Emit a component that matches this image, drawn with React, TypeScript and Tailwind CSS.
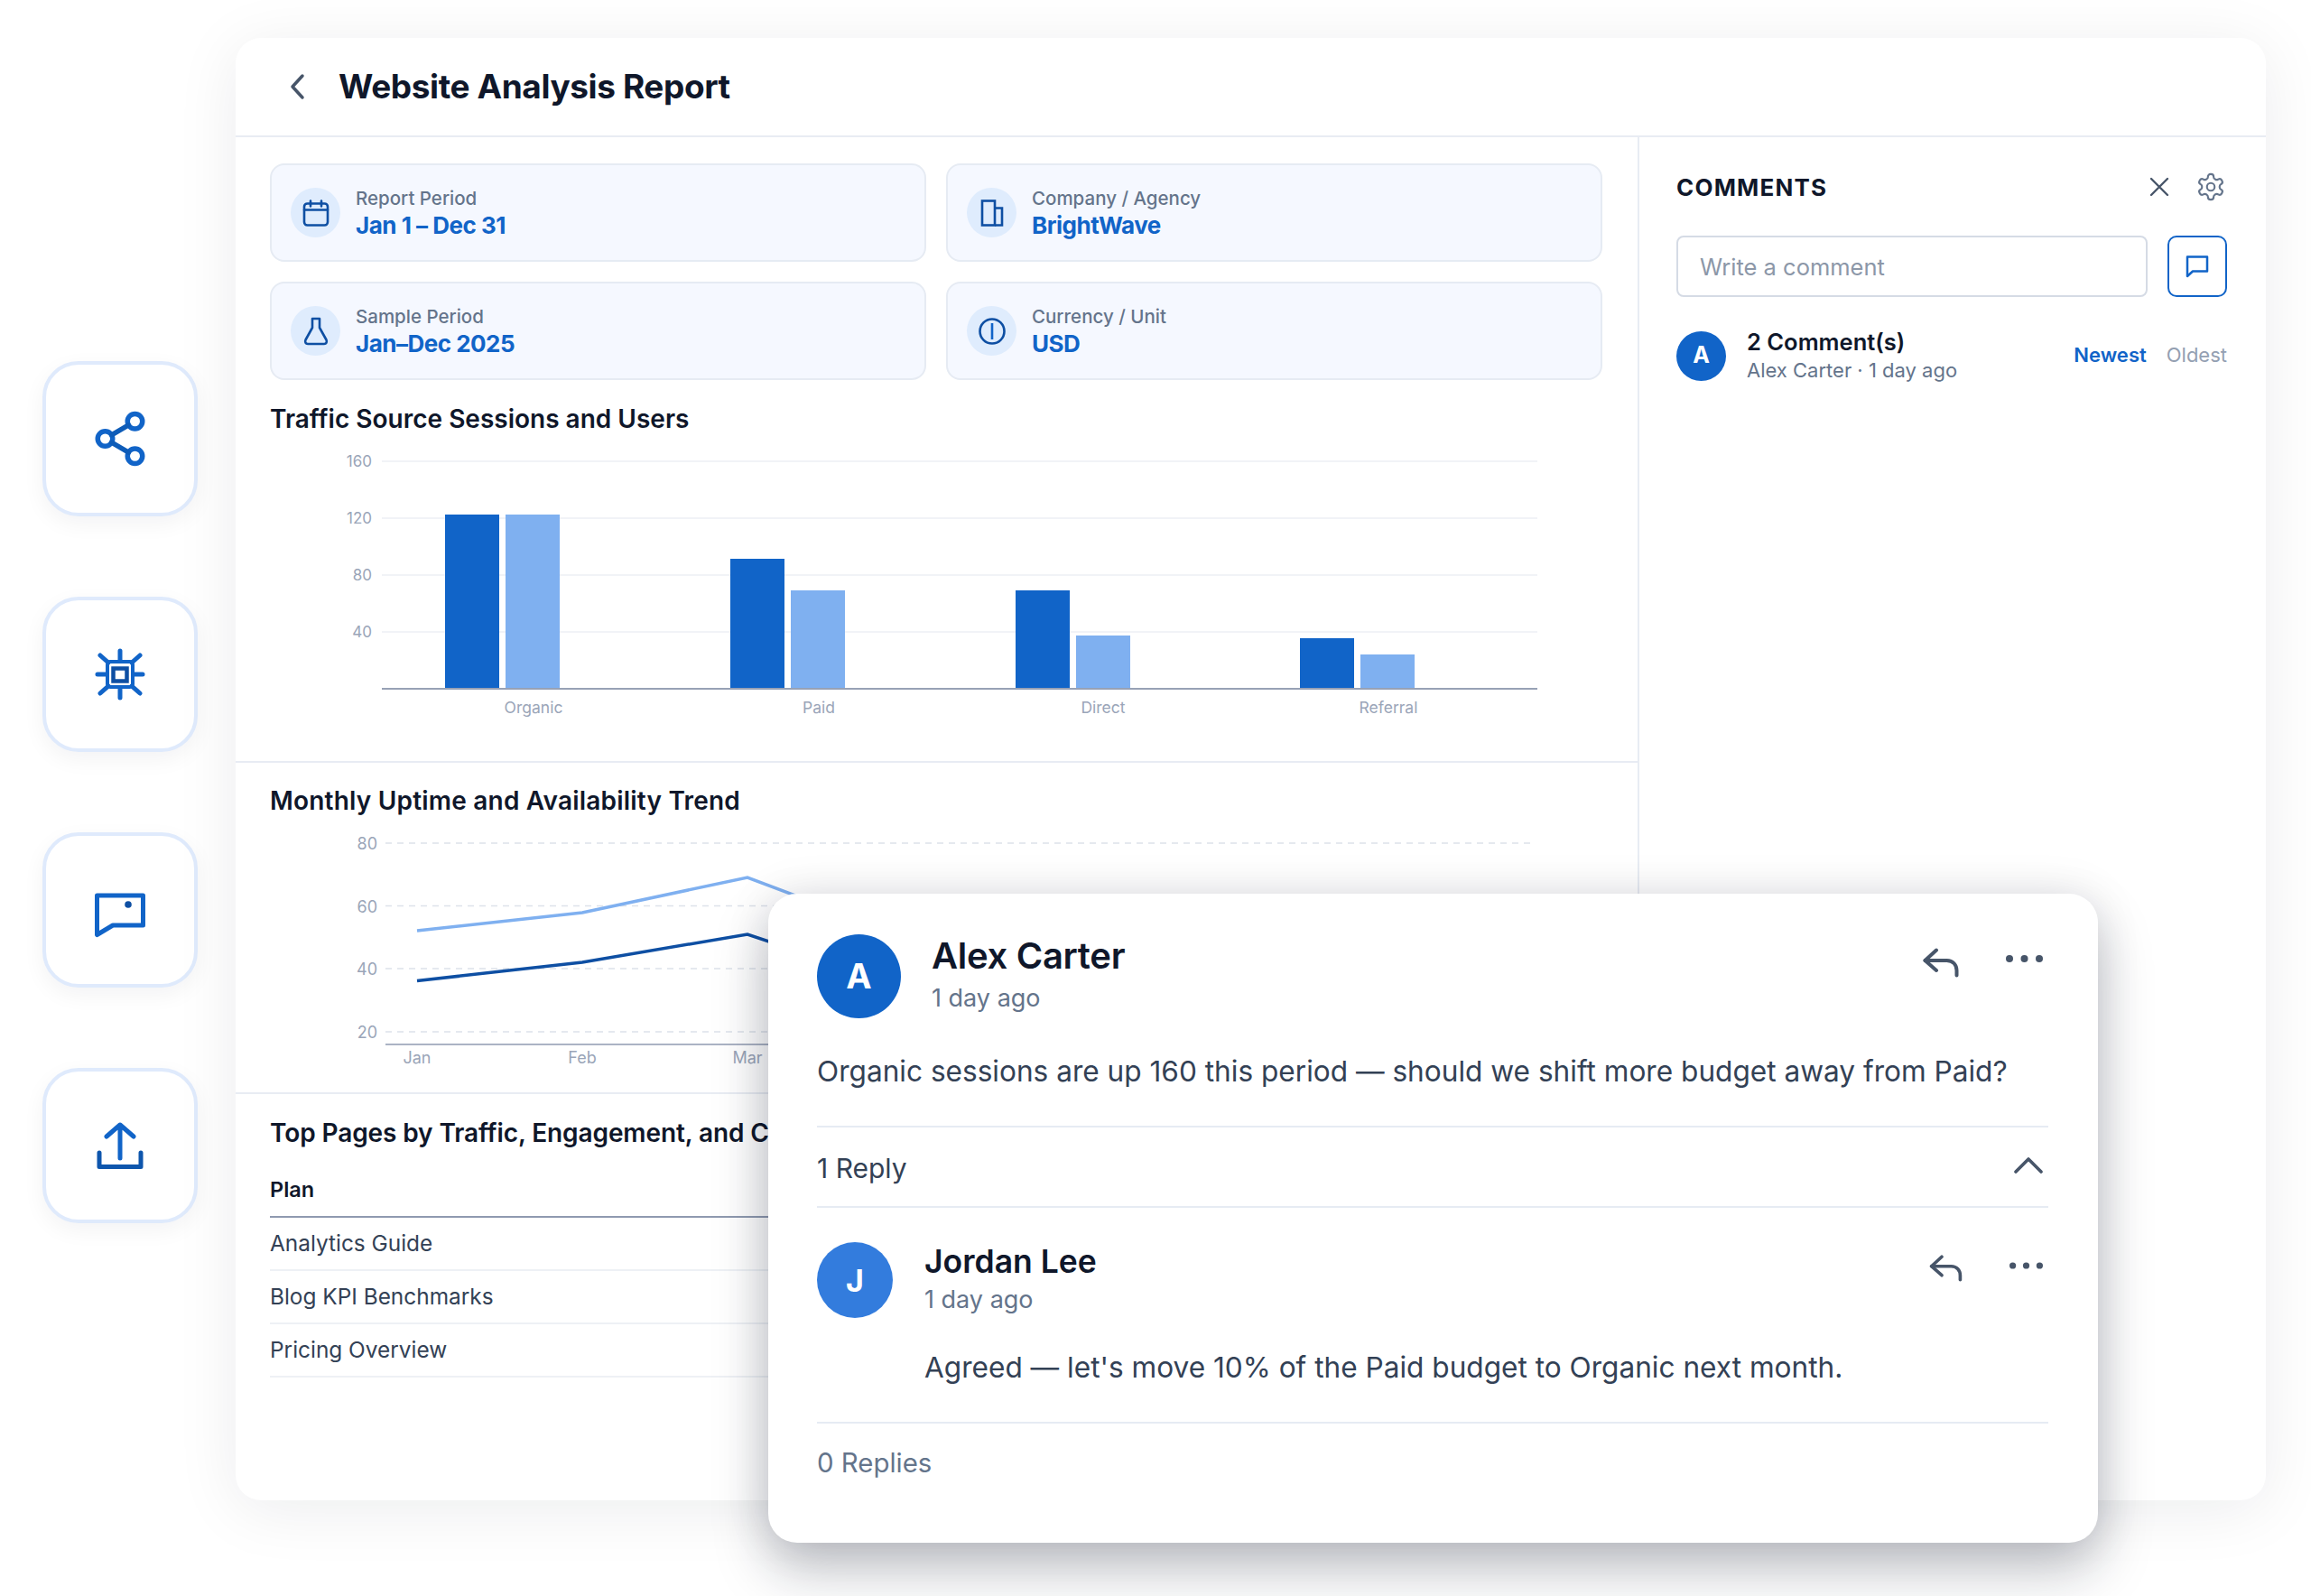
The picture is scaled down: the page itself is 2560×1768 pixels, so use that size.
import React from "react";

const BLUE = "#1164c8";
const NAVY = "#0e4fa3";

function Share() {
  return (
    <svg width="66" height="66" viewBox="0 0 24 24" fill="none" stroke={BLUE} strokeWidth="2" strokeLinecap="round" strokeLinejoin="round">
      <circle cx="18" cy="5" r="3" />
      <circle cx="6" cy="12" r="3" />
      <circle cx="18" cy="19" r="3" />
      <path d="M8.59 13.51l6.83 3.98M15.41 6.51l-6.82 3.98" stroke="#0e5cb8" />
    </svg>
  );
}
function Chip() {
  return (
    <svg width="56" height="58" viewBox="0 0 56 58" fill="none" stroke={BLUE} strokeWidth="5" strokeLinecap="round" strokeLinejoin="round">
      <path d="M28 3v10M28 45v10M3 29h10M43 29h10M6 8l9 8M50 8l-9 8M6 50l9-8M50 50l-9-8" />
      <rect x="14" y="15" width="28" height="28" rx="3" strokeWidth="4" />
      <rect x="20.500" y="22.500" width="15" height="14" stroke={NAVY} strokeWidth="4.500" strokeLinejoin="miter" />
    </svg>
  );
}
function Bubble() {
  return (
    <svg className="mt-[11px]" width="56" height="50" viewBox="0 0 56 50" fill="none" stroke={BLUE} strokeWidth="5" strokeLinejoin="round">
      <path d="M2.500 3h51v33H20L2.500 46.500z" />
      <circle cx="37" cy="13" r="3.800" fill={NAVY} stroke="none" />
    </svg>
  );
}
function Upload() {
  return (
    <svg width="52" height="52" viewBox="0 0 52 52" fill="none" stroke={BLUE} strokeWidth="5" strokeLinecap="round" strokeLinejoin="round">
      <path d="M26 40V3M11 16L26 3l15 13" />
      <path d="M3 34v15.500h46V34" stroke="#0e56ad" />
    </svg>
  );
}

function RailButton({ children }: { children: React.ReactNode }) {
  return (
    <div className="flex h-[172px] w-[172px] items-center justify-center rounded-[40px] border-[4px] border-[#dfeafc] bg-white shadow-[0_8px_24px_rgba(15,23,42,0.05)]">
      {children}
    </div>
  );
}

function InfoCard({ label, value, icon }: { label: string; value: string; icon: React.ReactNode }) {
  return (
    <div className="flex h-[109px] items-center rounded-[16px] border-2 border-[#e6ebf3] bg-[#f5f8ff] pl-[21px]">
      <div className="flex h-[55px] w-[55px] shrink-0 items-center justify-center rounded-full bg-[#dfecfd]">{icon}</div>
      <div className="ml-[17px] flex flex-col">
        <span className="text-[20.500px] leading-[28px] font-medium text-[#64748b]">{label}</span>
        <span className="text-[26px] leading-[32px] font-bold tracking-[-0.5px] text-[#1164c8]">{value}</span>
      </div>
    </div>
  );
}

const iconProps = { fill: "none", stroke: NAVY, strokeWidth: 2.6, strokeLinecap: "round" as const, strokeLinejoin: "round" as const };

function BarChart() {
  const ticks = [
    [160, 510],
    [120, 573],
    [80, 636],
    [40, 699],
  ];
  const bars = [
    { name: "Organic", x: 493, a: 569, b: 569, c: 591 },
    { name: "Paid", x: 809, a: 618, b: 653, c: 907 },
    { name: "Direct", x: 1125, a: 653, b: 703, c: 1222 },
    { name: "Referral", x: 1440, a: 706, b: 724, c: 1538 },
  ];
  return (
    <svg className="mt-[8px] block" width="1552" height="320" viewBox="261 490 1552 320" fontFamily="Inter, sans-serif">
      {ticks.map(([t, y]) => (
        <g key={t}>
          <line x1="423" x2="1703" y1={y} y2={y} stroke="#f1f3f7" strokeWidth="2" />
          <text x="412" y={y + 6} textAnchor="end" fontSize="17" fill="#9aa5b8">{t}</text>
        </g>
      ))}
      {bars.map((b) => (
        <g key={b.name}>
          <rect x={b.x} y={b.a} width="60" height={762 - b.a} fill="#1164c8" />
          <rect x={b.x + 67} y={b.b} width="60" height={762 - b.b} fill="#7fb0f0" />
          <text x={b.c} y="789" textAnchor="middle" fontSize="17.500" fill="#9aa5b8">{b.name}</text>
        </g>
      ))}
      <line x1="423" x2="1703" y1="762" y2="762" stroke="#97a1b5" strokeWidth="2" />
    </svg>
  );
}

function LineChart() {
  const ticks = [
    [80, 933],
    [60, 1002.5],
    [40, 1072],
    [20, 1142],
  ];
  const months = [
    ["Jan", 462],
    ["Feb", 645],
    ["Mar", 828],
  ] as const;
  return (
    <svg className="mt-[15px] block" width="1552" height="270" viewBox="261 920 1552 270" fontFamily="Inter, sans-serif">
      {ticks.map(([t, y]) => (
        <g key={t}>
          <line x1="427" x2="1697" y1={y} y2={y} stroke="#dde2ea" strokeWidth="1.500" strokeDasharray="7 6" />
          <text x="418" y={y + 7} textAnchor="end" fontSize="18" fill="#9aa5b8">{t}</text>
        </g>
      ))}
      <line x1="427" x2="1697" y1="1156" y2="1156" stroke="#8f9ab0" strokeWidth="1.500" />
      {months.map(([m, x]) => (
        <text key={m} x={x} y="1177" textAnchor="middle" fontSize="18" fill="#9aa5b8">{m}</text>
      ))}
      <polyline points="462,1030 645,1010 828,971 1011,1040" fill="none" stroke="#7fb0f0" strokeWidth="3.500" />
      <polyline points="462,1085.500 645,1065 828,1034 1011,1095" fill="none" stroke="#0e4fa3" strokeWidth="3.500" />
    </svg>
  );
}

function ReplyIcon({ w, h }: { w: number; h: number }) {
  return (
    <svg width={w} height={h} viewBox="0 0 40 33" fill="none" stroke="#475569" strokeWidth="4" strokeLinecap="round" strokeLinejoin="round">
      <path d="M15 2.500L2.500 14 15 25" />
      <path d="M2.500 14h24c7 0 11 5 11 11v5.500" />
    </svg>
  );
}
function Dots({ w }: { w: number }) {
  return (
    <svg width={w} height="8" viewBox="0 0 41 8" fill="#475569">
      <circle cx="4" cy="4" r="4" />
      <circle cx="20.500" cy="4" r="4" />
      <circle cx="37" cy="4" r="4" />
    </svg>
  );
}

function Overlay() {
  return (
    <div className="absolute top-[990px] left-[851px] flex h-[719px] w-[1473px] flex-col rounded-[32px] bg-white pt-[45px] pr-[55px] pl-[54px] shadow-[0_30px_60px_rgba(15,23,42,0.26),0_0_50px_rgba(15,23,42,0.1)]">
      <div className="relative flex h-[93px] items-start">
        <div className="flex h-[93px] w-[93px] shrink-0 items-center justify-center rounded-full bg-[#1164c8] text-[38px] font-bold text-white">A</div>
        <div className="ml-[34px] flex flex-col">
          <span className="text-[40px] leading-[48px] font-semibold tracking-[-0.3px] text-[#0f172a]">Alex Carter</span>
          <span className="mt-[3px] text-[27px] leading-[40px] text-[#64748b]">1 day ago</span>
        </div>
        <div className="absolute top-[15px] right-[99px]"><ReplyIcon w={40} h={33} /></div>
        <div className="absolute top-[23px] right-[6px]"><Dots w={41} /></div>
      </div>
      <p className="mt-[37px] text-[31.600px] leading-[44px] whitespace-nowrap text-[#334155]">Organic sessions are up 160 this period — should we shift more budget away from Paid?</p>
      <div className="mt-[38px] h-[2px] bg-[#e6ebf3]" />
      <div className="flex h-[87px] items-center justify-between">
        <span className="pt-[3px] text-[30px] text-[#334155]">1 Reply</span>
        <svg className="mt-[-4px] mr-[6px]" width="32" height="18" viewBox="0 0 32 18" fill="none" stroke="#475569" strokeWidth="3.600" strokeLinecap="round" strokeLinejoin="round">
          <path d="M2 16L16 2l14 14" />
        </svg>
      </div>
      <div className="h-[2px] bg-[#e6ebf3]" />
      <div className="relative mt-[38px] flex h-[84px] items-start">
        <div className="flex h-[84px] w-[84px] shrink-0 items-center justify-center rounded-full bg-[#337cdd] text-[34px] font-bold text-white">J</div>
        <div className="ml-[35px] flex flex-col">
          <span className="text-[35.500px] leading-[44px] font-semibold text-[#0f172a]">Jordan Lee</span>
          <span className="text-[27px] leading-[40px] text-[#64748b]">1 day ago</span>
        </div>
        <div className="absolute top-[14px] right-[95px]"><ReplyIcon w={37} h={30} /></div>
        <div className="absolute top-[22px] right-[6px]"><Dots w={37} /></div>
      </div>
      <p className="mt-[33px] ml-[119px] text-[31.600px] leading-[44px] whitespace-nowrap text-[#334155]">Agreed — let's move 10% of the Paid budget to Organic next month.</p>
      <div className="mt-[38px] h-[2px] bg-[#e6ebf3]" />
      <span className="mt-[24px] text-[29.400px] leading-[40px] text-[#64748b]">0 Replies</span>
    </div>
  );
}

export default function App() {
  return (
    <div className="relative flex h-[1768px] w-[2560px] overflow-hidden bg-white font-['Inter',sans-serif]">
      <div className="ml-[47px] flex w-[172px] shrink-0 flex-col gap-[89px] pt-[400px]">
        <RailButton><Share /></RailButton>
        <RailButton><Chip /></RailButton>
        <RailButton><Bubble /></RailButton>
        <RailButton><Upload /></RailButton>
      </div>

      <div className="mt-[42px] ml-[42px] flex h-[1620px] w-[2249px] flex-col overflow-hidden rounded-[28px] bg-white shadow-[0_10px_70px_rgba(15,23,42,0.08)]">
        <div className="flex h-[110px] shrink-0 items-center border-b-2 border-[#e8ecf3] pl-[59px]">
          <svg width="20" height="30" viewBox="0 0 20 30" fill="none" stroke="#475569" strokeWidth="3.500" strokeLinecap="round" strokeLinejoin="round">
            <path d="M15 3L4 15l11 12" />
          </svg>
          <h1 className="ml-[35px] text-[37px] leading-[48px] font-bold tracking-[-0.4px] text-[#0f172a]">Website Analysis Report</h1>
        </div>

        <div className="flex min-h-0 flex-1">
          <div className="flex w-[1555px] shrink-0 flex-col border-r-2 border-[#e8ecf3]">
            <div className="h-[693px] shrink-0 border-b-2 border-[#e8ecf3]">
              <div className="mt-[29px] mr-[39px] ml-[38px] grid grid-cols-2 gap-[22px]">
                <InfoCard label="Report Period" value="Jan 1 – Dec 31" icon={
                  <svg width="30" height="30" viewBox="0 0 30 30" {...iconProps}>
                    <rect x="2" y="4.500" width="26" height="24" rx="3.500" />
                    <path d="M2 11.500h26M9 1.500v6M21 1.500v6" />
                  </svg>
                } />
                <InfoCard label="Company / Agency" value="BrightWave" icon={
                  <svg width="26" height="30" viewBox="0 0 26 30" fill="none" stroke={NAVY} strokeWidth="2.600">
                    <rect x="2" y="1.500" width="14" height="27" />
                    <path d="M16 9.500h8v19h-8" />
                  </svg>
                } />
                <InfoCard label="Sample Period" value="Jan–Dec 2025" icon={
                  <svg width="28" height="32" viewBox="0 0 28 32" {...iconProps}>
                    <path d="M10 2h8v10l7.500 13.500c1 2.200 0 4.500-2.500 4.500H5c-2.500 0-3.500-2.300-2.500-4.500L10 12z" />
                  </svg>
                } />
                <InfoCard label="Currency / Unit" value="USD" icon={
                  <svg width="30" height="30" viewBox="0 0 30 30" fill="none" stroke={NAVY} strokeWidth="2.600">
                    <circle cx="15" cy="15" r="13.500" />
                    <path d="M15 6v18" stroke="#1164c8" />
                  </svg>
                } />
              </div>
              <h2 className="mx-[38px] mt-[24px] text-[28px] leading-[38px] font-semibold text-[#0f172a]">Traffic Source Sessions and Users</h2>
              <BarChart />
            </div>

            <div className="h-[367px] shrink-0 border-b-2 border-[#e8ecf3]">
              <h2 className="mx-[38px] mt-[23px] text-[28px] leading-[38px] font-semibold tracking-[0.2px] text-[#0f172a]">Monthly Uptime and Availability Trend</h2>
              <LineChart />
            </div>

            <div className="pr-[39px] pl-[38px]">
              <h2 className="mt-[24px] text-[28px] leading-[38px] font-semibold tracking-[-0.1px] whitespace-nowrap text-[#0f172a]">Top Pages by Traffic, Engagement, and Conversion</h2>
              <div className="mt-[29px] flex h-[46px] items-start border-b-2 border-[#8f9ab0] text-[23.500px] leading-[30px] font-semibold text-[#0f172a]">Plan</div>
              {["Analytics Guide", "Blog KPI Benchmarks", "Pricing Overview"].map((r) => (
                <div key={r} className="flex h-[59px] items-center border-b-2 border-[#eef1f5] text-[24.400px] text-[#334155]">{r}</div>
              ))}
            </div>
          </div>

          <div className="flex-1 pt-[37px] pr-[44px] pl-[41px]">
            <div className="flex h-[36px] items-center justify-between">
              <span className="text-[26px] font-bold tracking-[1.200px] text-[#0f172a]">COMMENTS</span>
              <div className="flex items-center gap-[28px]">
                <svg width="24" height="24" viewBox="0 0 24 24" fill="none" stroke="#475569" strokeWidth="2.400" strokeLinecap="round"><path d="M3 3l18 18M21 3L3 21" /></svg>
                <svg className="mr-[1px]" width="34" height="34" viewBox="0 0 24 24" fill="none" stroke="#64748b" strokeWidth="1.500" strokeLinecap="round" strokeLinejoin="round">
                  <path d="M12.220 2h-.44a2 2 0 0 0-2 2v.18a2 2 0 0 1-1 1.730l-.43.250a2 2 0 0 1-2 0l-.15-.08a2 2 0 0 0-2.730.730l-.22.380a2 2 0 0 0 .730 2.730l.15.100a2 2 0 0 1 1 1.720v.510a2 2 0 0 1-1 1.740l-.15.090a2 2 0 0 0-.730 2.730l.22.380a2 2 0 0 0 2.730.730l.15-.08a2 2 0 0 1 2 0l.43.250a2 2 0 0 1 1 1.730V20a2 2 0 0 0 2 2h.44a2 2 0 0 0 2-2v-.18a2 2 0 0 1 1-1.730l.43-.250a2 2 0 0 1 2 0l.15.080a2 2 0 0 0 2.730-.730l.22-.390a2 2 0 0 0-.730-2.730l-.15-.080a2 2 0 0 1-1-1.740v-.500a2 2 0 0 1 1-1.740l.15-.090a2 2 0 0 0 .730-2.730l-.22-.380a2 2 0 0 0-2.730-.730l-.15.080a2 2 0 0 1-2 0l-.43-.250a2 2 0 0 1-1-1.730V4a2 2 0 0 0-2-2z" />
                  <circle cx="12" cy="12" r="3" />
                </svg>
              </div>
            </div>
            <div className="mt-[36px] flex gap-[22px]">
              <div className="flex h-[68px] w-[522px] items-center rounded-[8px] border-2 border-[#d5dbe5] pt-[2px] pl-[24px] text-[25.500px] text-[#8c97a8]">Write a comment</div>
              <div className="flex h-[68px] w-[66px] items-center justify-center rounded-[10px] border-2 border-[#1164c8]">
                <svg width="26" height="26" viewBox="0 0 26 26" fill="none" stroke="#1164c8" strokeWidth="2.500" strokeLinejoin="round">
                  <path d="M2 2.500h22v16H8l-6 5.500z" />
                </svg>
              </div>
            </div>
            <div className="mt-[34px] flex items-center">
              <div className="flex h-[55px] w-[55px] items-center justify-center rounded-full bg-[#1164c8] text-[25px] font-bold text-white">A</div>
              <div className="ml-[23px] flex flex-col">
                <span className="text-[25.500px] leading-[32px] font-semibold text-[#0f172a]">2 Comment(s)</span>
                <span className="text-[22px] leading-[30px] text-[#64748b]">Alex Carter · 1 day ago</span>
              </div>
              <span className="mb-[2px] ml-auto text-[22px] font-semibold text-[#1164c8]">Newest</span>
              <span className="mb-[2px] ml-[22px] text-[22px] text-[#94a0b2]">Oldest</span>
            </div>
          </div>
        </div>
      </div>

      <Overlay />
    </div>
  );
}
